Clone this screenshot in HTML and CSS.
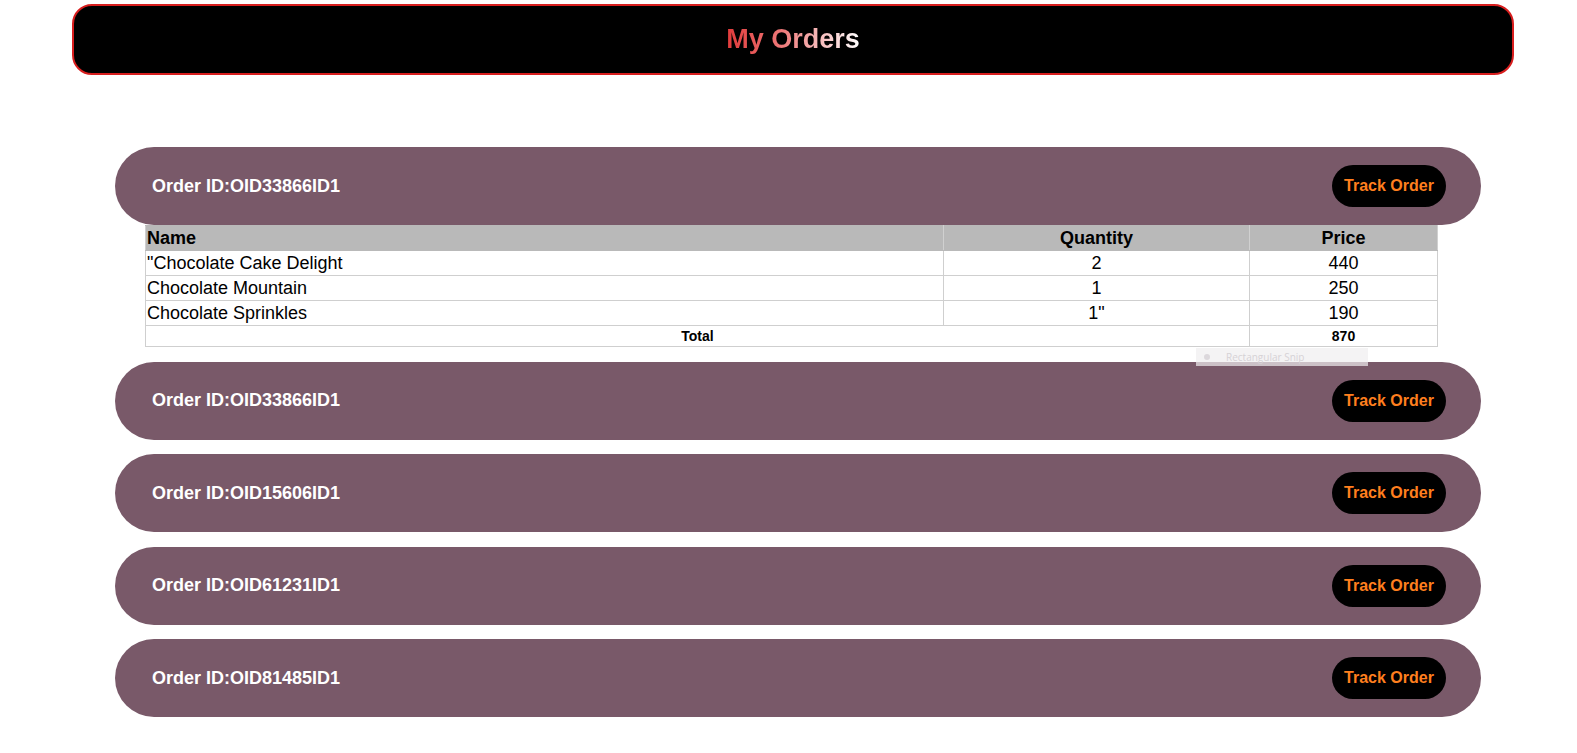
FILE: index.html
```html
<!DOCTYPE html>
<html>
<head>
<meta charset="utf-8">
<link rel="stylesheet" href="styles.css">
</head>
<body>
<header class="top">
  <h1 class="title">My Orders</h1>
</header>
<main class="orders">
  <section class="order">
    <div class="bar">
      <span class="oid">Order ID:OID33866ID1</span>
      <button class="track">Track Order</button>
    </div>
    <div class="details">
      <table class="items">
        <thead>
          <tr><th class="c-name">Name</th><th class="c-qty">Quantity</th><th class="c-price">Price</th></tr>
        </thead>
        <tbody>
          <tr><td class="left">"Chocolate Cake Delight</td><td>2</td><td>440</td></tr>
          <tr><td class="left">Chocolate Mountain</td><td>1</td><td>250</td></tr>
          <tr><td class="left">Chocolate Sprinkles</td><td>1"</td><td>190</td></tr>
          <tr class="total"><td colspan="2">Total</td><td>870</td></tr>
        </tbody>
      </table>
      <div class="snip"><span class="snip-dot"></span>Rectangular Snip</div>
    </div>
  </section>
  <section class="order">
    <div class="bar">
      <span class="oid">Order ID:OID33866ID1</span>
      <button class="track">Track Order</button>
    </div>
  </section>
  <section class="order">
    <div class="bar">
      <span class="oid">Order ID:OID15606ID1</span>
      <button class="track">Track Order</button>
    </div>
  </section>
  <section class="order">
    <div class="bar">
      <span class="oid">Order ID:OID61231ID1</span>
      <button class="track">Track Order</button>
    </div>
  </section>
  <section class="order">
    <div class="bar">
      <span class="oid">Order ID:OID81485ID1</span>
      <button class="track">Track Order</button>
    </div>
  </section>
</main>
</body>
</html>
```
FILE: styles.css
```css
* { box-sizing: border-box; }
html, body { margin: 0; padding: 0; background: #fff; }
body { font-family: "Liberation Sans", Arial, sans-serif; }

.top {
  margin: 4px 0 0 72px;
  width: 1442px;
  height: 71px;
  background: #000;
  border: 2px solid #d81e1e;
  border-radius: 20px;
  display: flex;
  align-items: center;
  justify-content: center;
}
.title {
  margin: 0;
  font-size: 27px;
  font-weight: bold;
  background: linear-gradient(to right, #e03a3a 0%, #ee7676 40%, #ffffff 100%);
  -webkit-background-clip: text;
  background-clip: text;
  color: transparent;
}

.orders {
  margin: 72px 0 0 115px;
  width: 1366px;
  display: flex;
  flex-direction: column;
  gap: 14.5px;
}

.bar {
  height: 78px;
  background: #795969;
  border-radius: 39px;
  display: flex;
  align-items: center;
  justify-content: space-between;
  padding: 0 35px 0 37px;
}
.oid {
  color: #fff;
  font-weight: bold;
  font-size: 18px;
}
.track {
  width: 114px;
  height: 42px;
  border: none;
  border-radius: 21px;
  background: #000;
  color: #ff7f1e;
  font-family: "Liberation Sans", Arial, sans-serif;
  font-weight: bold;
  font-size: 16px;
  padding: 0;
}

.details {
  position: relative;
  padding: 0 0 0 30px;
}
.items {
  width: 1293px;
  border-collapse: collapse;
  font-size: 18px;
  color: #000;
}
.items th, .items td {
  border: 1px solid #cfcfcf;
  height: 25px;
  padding: 0 1px;
  text-align: center;
}
.items th {
  background: #b9b9b9;
  font-weight: bold;
  border-color: #b9b9b9 #d0d0d0;
}
.items th.c-name { text-align: left; width: 798px; }
.items th.c-qty { width: 306px; }
.items td.left { text-align: left; }
.items tr.total td {
  font-size: 14px;
  font-weight: bold;
  height: 21px;
}

.snip {
  position: absolute;
  left: 1081px;
  top: 123px;
  width: 172px;
  height: 18px;
  background: rgba(240, 238, 240, 0.7);
  color: #d6d2d6;
  font-family: "Open Sans", sans-serif;
  font-size: 10px;
  line-height: 18px;
  padding-left: 30px;
}
.snip-dot {
  position: absolute;
  left: 8px;
  top: 6px;
  width: 6px;
  height: 6px;
  border-radius: 50%;
  background: #dcd8dc;
}
```
